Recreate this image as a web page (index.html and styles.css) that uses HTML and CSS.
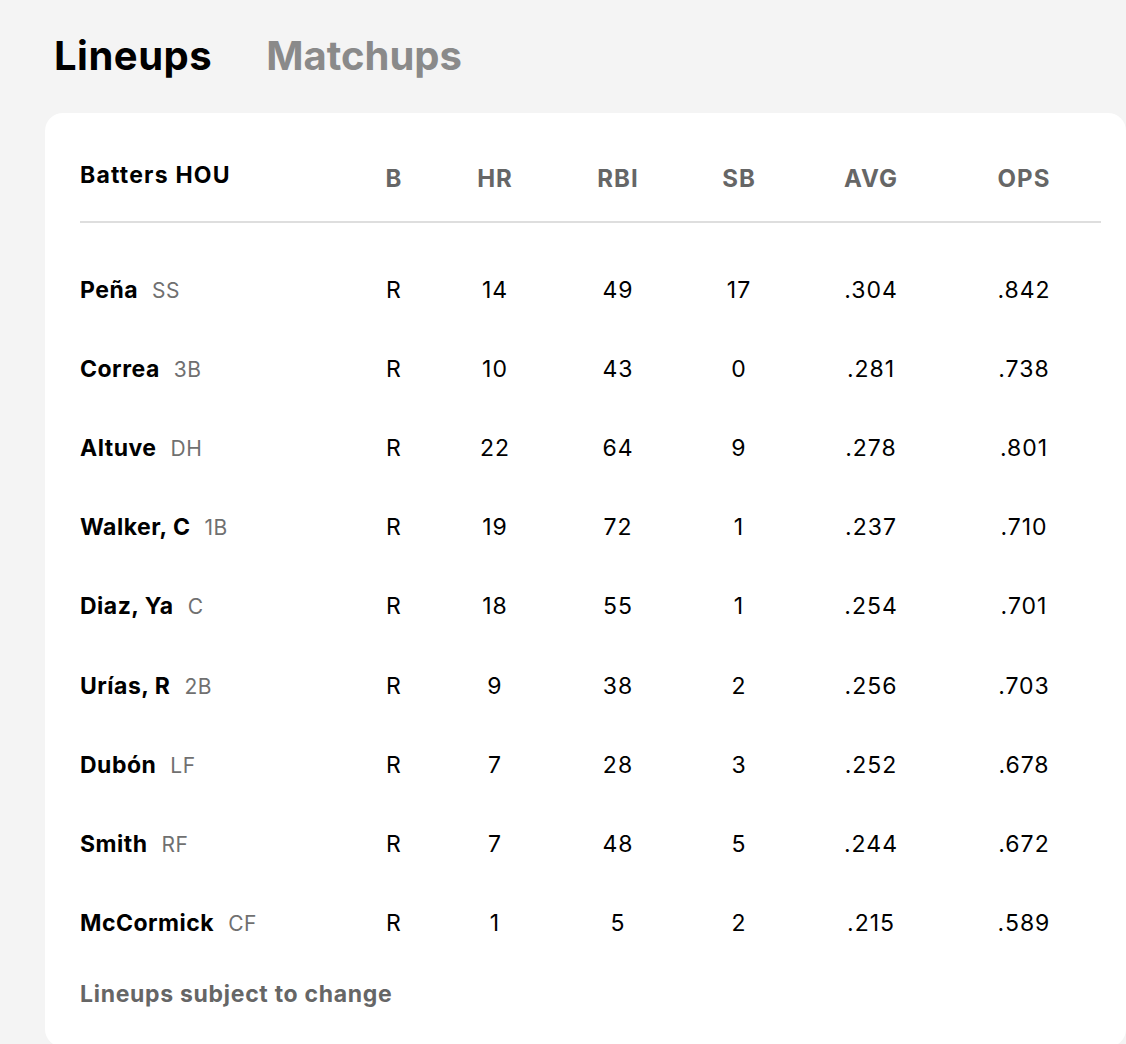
FILE: index.html
```html
<!DOCTYPE html>
<html>
<head>
<meta charset="utf-8">
<link rel="stylesheet" href="styles.css">
</head>
<body>
<div class="page">
  <div class="tabs">
    <span class="tab active">Lineups</span>
    <span class="tab">Matchups</span>
  </div>
  <div class="card">
    <div class="row head">
      <div class="cell name"><span class="team">Batters HOU</span></div>
      <div class="cell">B</div>
      <div class="cell">HR</div>
      <div class="cell">RBI</div>
      <div class="cell">SB</div>
      <div class="cell">AVG</div>
      <div class="cell last">OPS</div>
    </div>
    <div class="body">
      <div class="row"><div class="cell name"><b>Peña</b><span class="pos">SS</span></div><div class="cell">R</div><div class="cell">14</div><div class="cell">49</div><div class="cell">17</div><div class="cell">.304</div><div class="cell last">.842</div></div>
      <div class="row"><div class="cell name"><b>Correa</b><span class="pos">3B</span></div><div class="cell">R</div><div class="cell">10</div><div class="cell">43</div><div class="cell">0</div><div class="cell">.281</div><div class="cell last">.738</div></div>
      <div class="row"><div class="cell name"><b>Altuve</b><span class="pos">DH</span></div><div class="cell">R</div><div class="cell">22</div><div class="cell">64</div><div class="cell">9</div><div class="cell">.278</div><div class="cell last">.801</div></div>
      <div class="row"><div class="cell name"><b>Walker, C</b><span class="pos">1B</span></div><div class="cell">R</div><div class="cell">19</div><div class="cell">72</div><div class="cell">1</div><div class="cell">.237</div><div class="cell last">.710</div></div>
      <div class="row"><div class="cell name"><b>Diaz, Ya</b><span class="pos">C</span></div><div class="cell">R</div><div class="cell">18</div><div class="cell">55</div><div class="cell">1</div><div class="cell">.254</div><div class="cell last">.701</div></div>
      <div class="row"><div class="cell name"><b>Urías, R</b><span class="pos">2B</span></div><div class="cell">R</div><div class="cell">9</div><div class="cell">38</div><div class="cell">2</div><div class="cell">.256</div><div class="cell last">.703</div></div>
      <div class="row"><div class="cell name"><b>Dubón</b><span class="pos">LF</span></div><div class="cell">R</div><div class="cell">7</div><div class="cell">28</div><div class="cell">3</div><div class="cell">.252</div><div class="cell last">.678</div></div>
      <div class="row"><div class="cell name"><b>Smith</b><span class="pos">RF</span></div><div class="cell">R</div><div class="cell">7</div><div class="cell">48</div><div class="cell">5</div><div class="cell">.244</div><div class="cell last">.672</div></div>
      <div class="row"><div class="cell name"><b>McCormick</b><span class="pos">CF</span></div><div class="cell">R</div><div class="cell">1</div><div class="cell">5</div><div class="cell">2</div><div class="cell">.215</div><div class="cell last">.589</div></div>
    </div>
    <div class="note">Lineups subject to change</div>
  </div>
</div>
</body>
</html>
```

FILE: styles.css
```css
html, body {
  margin: 0;
  padding: 0;
  background: #f4f4f4;
  font-family: "Inter", "Lato", "Liberation Sans", sans-serif;
  color: #000;
}
.page {
  padding: 30px 0 0 45px;
  overflow: hidden;
  height: 1044px;
  box-sizing: border-box;
}
.tabs {
  display: flex;
  gap: 54px;
  padding-left: 9px;
  height: 83px;
  align-items: flex-start;
}
.tab {
  font-size: 40px;
  font-weight: 700;
  line-height: 52px;
  color: #000;
  letter-spacing: 0.5px;
}
.tab.inactive {
  color: #8a8a8a;
}
.tabs .tab:not(.active) {
  color: #8a8a8a;
  letter-spacing: 0;
}
.card {
  background: #fff;
  border-radius: 18px;
  padding: 44px 25px 40px 35px;
  width: 1081px;
  box-sizing: border-box;
}
.row {
  display: grid;
  grid-template-columns: 280px 68px 134px 112px 130px 134px 163px;
  align-items: center;
  height: 79px;
  font-size: 23px;
  letter-spacing: 1px;
}
.body .row {
  height: 79.2px;
}
.row.head {
  height: 64px;
  align-items: start;
  border-bottom: 2px solid #dedede;
  font-weight: 700;
  color: #666;
  font-size: 24px;
}
.cell {
  text-align: center;
  white-space: nowrap;
}
.cell.last {
  padding-left: 9px;
}
.cell.name {
  text-align: left;
}
.head .cell {
  line-height: 30px;
  padding-top: 7px;
}
.head .cell.name {
  padding-top: 3px;
}
.team {
  color: #000;
  font-size: 23px;
  letter-spacing: 1.2px;
}
.body {
  padding-top: 27px;
}
.name b {
  font-size: 23px;
  font-weight: 700;
  letter-spacing: 0.5px;
}
.pos {
  font-size: 21px;
  color: #707070;
  margin-left: 14px;
  letter-spacing: 0.5px;
}
.note {
  margin-top: 18px;
  font-size: 23px;
  font-weight: 700;
  color: #666;
  line-height: 26px;
  letter-spacing: 0.7px;
}
```
